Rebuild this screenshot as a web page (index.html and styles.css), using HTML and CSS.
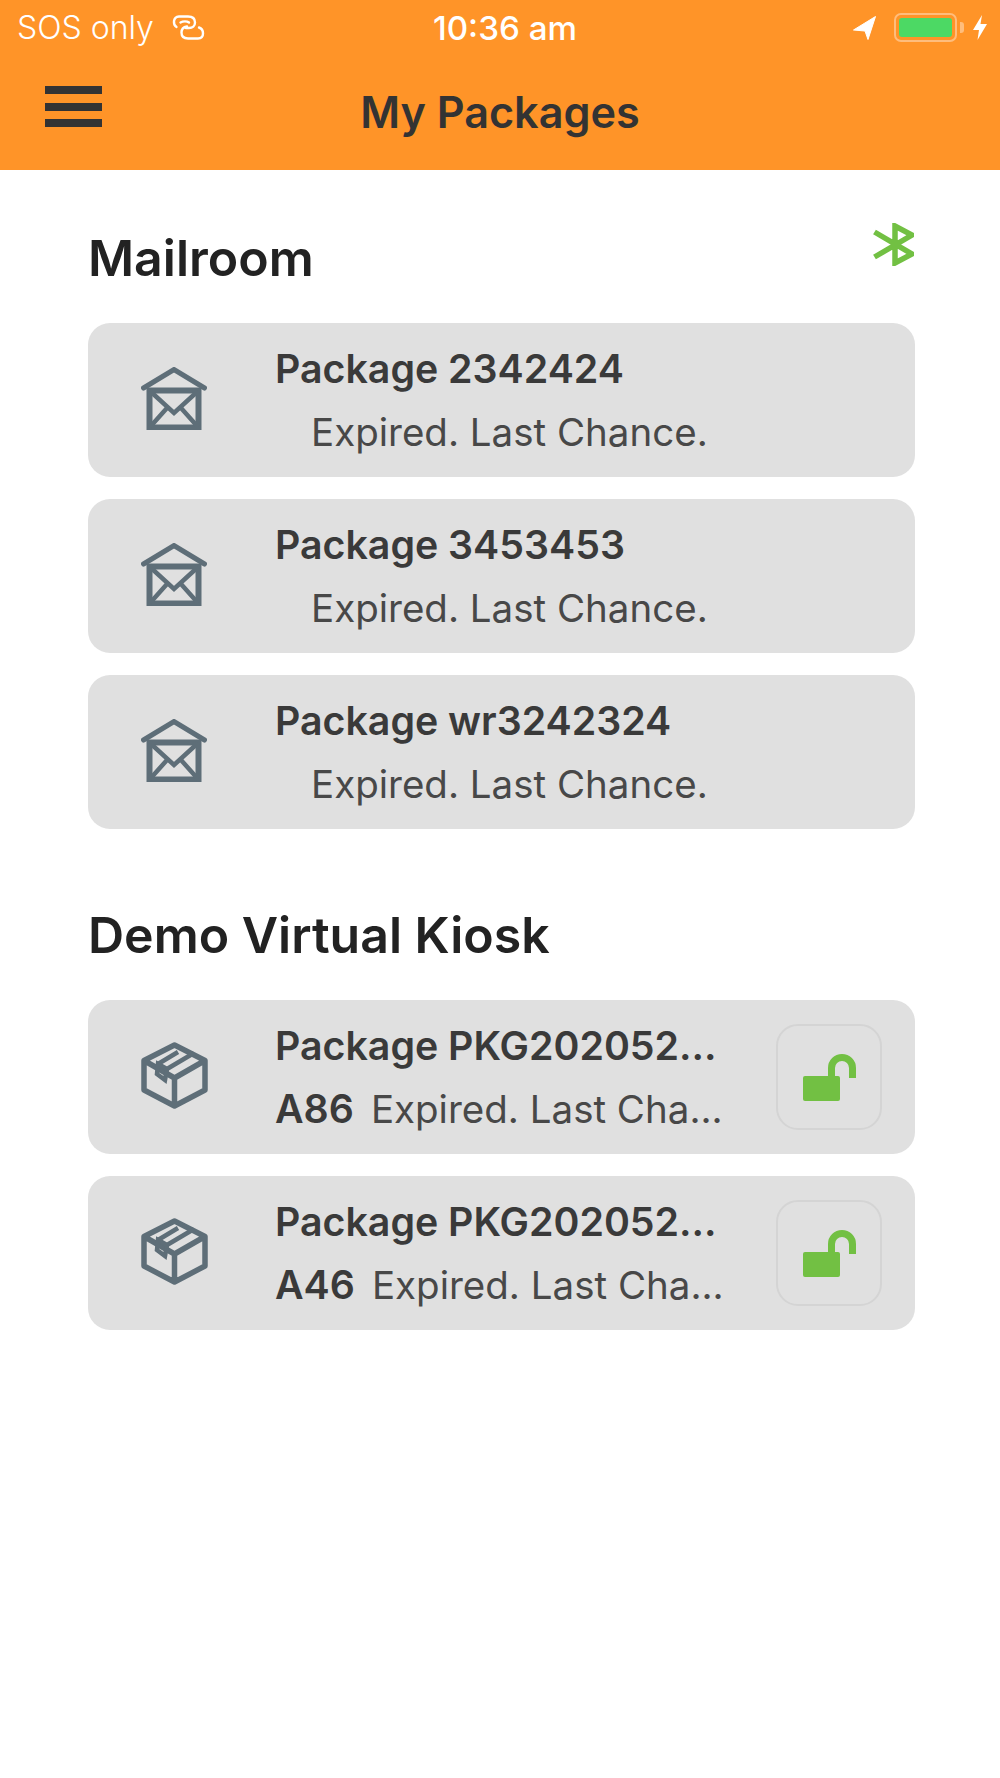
FILE: index.html
```html
<!DOCTYPE html>
<html>
	<head>
		<meta charset="utf-8">
		<meta name="viewport" content="width=device-width,initial-scale=1,user-scalable=no">
		<title>My Packages</title>
		<link rel="stylesheet" href="styles.css">
	</head>
	<body>
		<svg class="defs" width="0" height="0">
			<symbol id="icon-mailroom" viewBox="0 0 66 63">
				<path d="M2.500 21 L33 2.500 L63.500 21" fill="none" stroke="currentColor" stroke-width="5" stroke-linecap="round"/>
				<rect x="8.500" y="23.500" width="49" height="37" fill="none" stroke="currentColor" stroke-width="6"/>
				<path d="M9 24 L33 46 L57 24 M9 60 L26 41 M57 60 L40 41" fill="none" stroke="currentColor" stroke-width="4.500"/>
			</symbol>
			<symbol id="icon-box" viewBox="0 0 67 67">
				<path d="M33.500 3 L64 18.500 V48 L33.500 64 L3 48 V18.500 Z M3 18.500 L33.500 36 L64 18.500 M33.500 36 V64" fill="none" stroke="currentColor" stroke-width="5.500" stroke-linejoin="round"/>
				<path d="M17 22 L37 10 M53 11 L26 27 L24 38 L16 32 L17 22 L26 27" fill="none" stroke="currentColor" stroke-width="4.500"/>
			</symbol>
			<symbol id="icon-unlock" viewBox="0 0 53 47">
				<rect y="22" width="37" height="25" rx="2"/>
				<path d="M28.500 23 V14 A10.500 10.500 0 0 1 49.500 14 V24" fill="none" stroke="currentColor" stroke-width="7"/>
			</symbol>
		</svg>

		<header class="top-bar">
			<div class="status-bar">
				<div class="status-left">
					<span>SOS only</span>
					<svg class="link-icon" viewBox="0 0 33 25" width="33" height="25">
						<path d="M4.500 12 C1 10 0.500 2 7 1.500 L16 1.500 C21 1.500 23 4 23 7.500 C23 11 20.500 13 17 13 L14 13 M27 12.500 C32 14 33 23.500 26 23.500 L16 23.500 C11 23.500 9.500 20.500 9.500 17.500 C9.500 14 12 12 15 11.500 M8.500 7.500 C11 6 15 6 17 7.500" fill="none" stroke="#fff" stroke-width="2.400" stroke-linecap="round"/>
					</svg>
				</div>
				<div class="status-time">10:36 am</div>
				<div class="status-right">
					<svg viewBox="0 0 23 24" width="23" height="24">
						<path d="M0.500 14 L22.500 0.500 L15 23.500 L12 15 Z" fill="#fff" stroke="#fff" stroke-width="1" stroke-linejoin="round"/>
					</svg>
					<div class="battery"><div class="battery-level"></div></div>
					<div class="battery-nub"></div>
					<svg class="bolt" viewBox="0 0 14 25" width="14" height="25">
						<path d="M9 0 L0 15 H6 L4.500 25 L14 9 H7.500 Z" fill="#fff"/>
					</svg>
				</div>
			</div>
			<div class="nav-bar">
				<div class="menu-button"><span></span><span></span><span></span></div>
				<h1>My Packages</h1>
			</div>
		</header>

		<main>
			<section class="first">
				<div class="section-head">
					<h2>Mailroom</h2>
					<svg class="bluetooth" viewBox="0 0 41 43" width="41" height="43">
						<path d="M1.500 9 L39 31 L22 40 V3 L39 12 L1.500 34" fill="none" stroke="#72c043" stroke-width="5.500"/>
					</svg>
				</div>
				<div class="card">
					<svg class="card-icon mail"><use href="#icon-mailroom"/></svg>
					<div class="card-text">
						<div class="card-title">Package 2342424</div>
						<div class="card-sub"><span class="card-status">Expired. Last Chance.</span></div>
					</div>
				</div>
				<div class="card">
					<svg class="card-icon mail"><use href="#icon-mailroom"/></svg>
					<div class="card-text">
						<div class="card-title">Package 3453453</div>
						<div class="card-sub"><span class="card-status">Expired. Last Chance.</span></div>
					</div>
				</div>
				<div class="card">
					<svg class="card-icon mail"><use href="#icon-mailroom"/></svg>
					<div class="card-text">
						<div class="card-title">Package wr3242324</div>
						<div class="card-sub"><span class="card-status">Expired. Last Chance.</span></div>
					</div>
				</div>
			</section>
			<section>
				<div class="section-head">
					<h2>Demo Virtual Kiosk</h2>
				</div>
				<div class="card">
					<svg class="card-icon box"><use href="#icon-box"/></svg>
					<div class="card-text">
						<div class="card-title">Package PKG202052...</div>
						<div class="card-sub"><span class="card-code">A86</span><span class="card-status">Expired. Last Cha...</span></div>
					</div>
					<div class="unlock-button"><svg><use href="#icon-unlock"/></svg></div>
				</div>
				<div class="card">
					<svg class="card-icon box"><use href="#icon-box"/></svg>
					<div class="card-text">
						<div class="card-title">Package PKG202052...</div>
						<div class="card-sub"><span class="card-code">A46</span><span class="card-status">Expired. Last Cha...</span></div>
					</div>
					<div class="unlock-button"><svg><use href="#icon-unlock"/></svg></div>
				</div>
			</section>
		</main>
	</body>
</html>
```

FILE: styles.css
```css
* {
	margin: 0;
	padding: 0;
	box-sizing: border-box;
}
body {
	font-family: "Inter", "Liberation Sans", sans-serif;
	background: #fff;
	min-height: 1778px;
}
.defs {
	display: block;
}
.top-bar {
	height: 170px;
	background: #ff9428;
}
.status-bar {
	height: 55px;
	display: grid;
	grid-template-columns: 1fr auto 1fr;
	align-items: center;
	padding: 0 13px 0 17px;
	color: #fff;
}
.status-left {
	display: flex;
	align-items: center;
	gap: 18px;
	font-size: 32px;
	font-weight: 300;
}
.status-time {
	padding-left: 6px;
	font-size: 33.200px;
	font-weight: 500;
}
.status-right {
	display: flex;
	align-items: center;
	justify-content: flex-end;
}
.battery {
	width: 63px;
	height: 29px;
	margin-left: 18px;
	padding: 3px;
	border: 2px solid #ffbd7c;
	border-radius: 7px;
}
.battery-level {
	height: 100%;
	background: #4cd964;
	border-radius: 3px;
}
.battery-nub {
	width: 4px;
	height: 11px;
	margin-left: 3px;
	background: #ffbd7c;
	border-radius: 0 3px 3px 0;
}
.bolt {
	margin-left: 9px;
}
.nav-bar {
	display: flex;
	height: 115px;
	padding: 31px 0 0 45px;
	position: relative;
}
.menu-button {
	width: 57px;
	height: 41px;
	display: flex;
	flex-direction: column;
	justify-content: space-between;
}
.menu-button span {
	height: 8px;
	background: #333;
}
h1 {
	position: absolute;
	left: 0;
	right: 0;
	top: 27px;
	text-align: center;
	font-size: 43.200px;
	line-height: 60px;
	font-weight: 600;
	color: #333;
}
main {
	padding: 0 85px 0 88px;
}
section {
	margin-top: 74px;
}
section.first {
	margin-top: 56px;
}
.section-head {
	display: flex;
	justify-content: space-between;
	align-items: flex-start;
	height: 97px;
}
h2 {
	font-size: 50px;
	line-height: 64px;
	font-weight: 600;
	color: #222;
}
.bluetooth {
	margin: -3px 1px 0 0;
}
.card {
	display: flex;
	align-items: center;
	height: 154px;
	margin-bottom: 22px;
	padding: 0 33px 0 54px;
	background: #e0e0e0;
	border-radius: 22px;
}
.card-icon {
	flex: none;
	color: #5e6e78;
}
.card-icon.mail {
	width: 66px;
	height: 63px;
	margin: 0 68px 3px -1px;
}
.card-icon.box {
	width: 67px;
	height: 67px;
	margin: 0 67px 4px -1px;
}
.card-text {
	flex: 1;
	display: flex;
	flex-direction: column;
	gap: 21px;
	color: #3a3a3a;
	font-size: 39.300px;
	line-height: 42px;
	white-space: nowrap;
}
.card-title {
	font-weight: 600;
}
.card-sub {
	display: flex;
}
.card-code {
	font-weight: 600;
}
.card-status {
	margin-left: 36px;
	color: #484848;
	font-size: 38.500px;
}
.card-code + .card-status {
	margin-left: 17px;
}
.unlock-button {
	width: 106px;
	height: 106px;
	flex: none;
	display: flex;
	align-items: center;
	justify-content: center;
	border: 2px solid #d4d4d4;
	border-radius: 22px;
}
.unlock-button svg {
	width: 53px;
	height: 47px;
	fill: #72c043;
	color: #72c043;
}
```
